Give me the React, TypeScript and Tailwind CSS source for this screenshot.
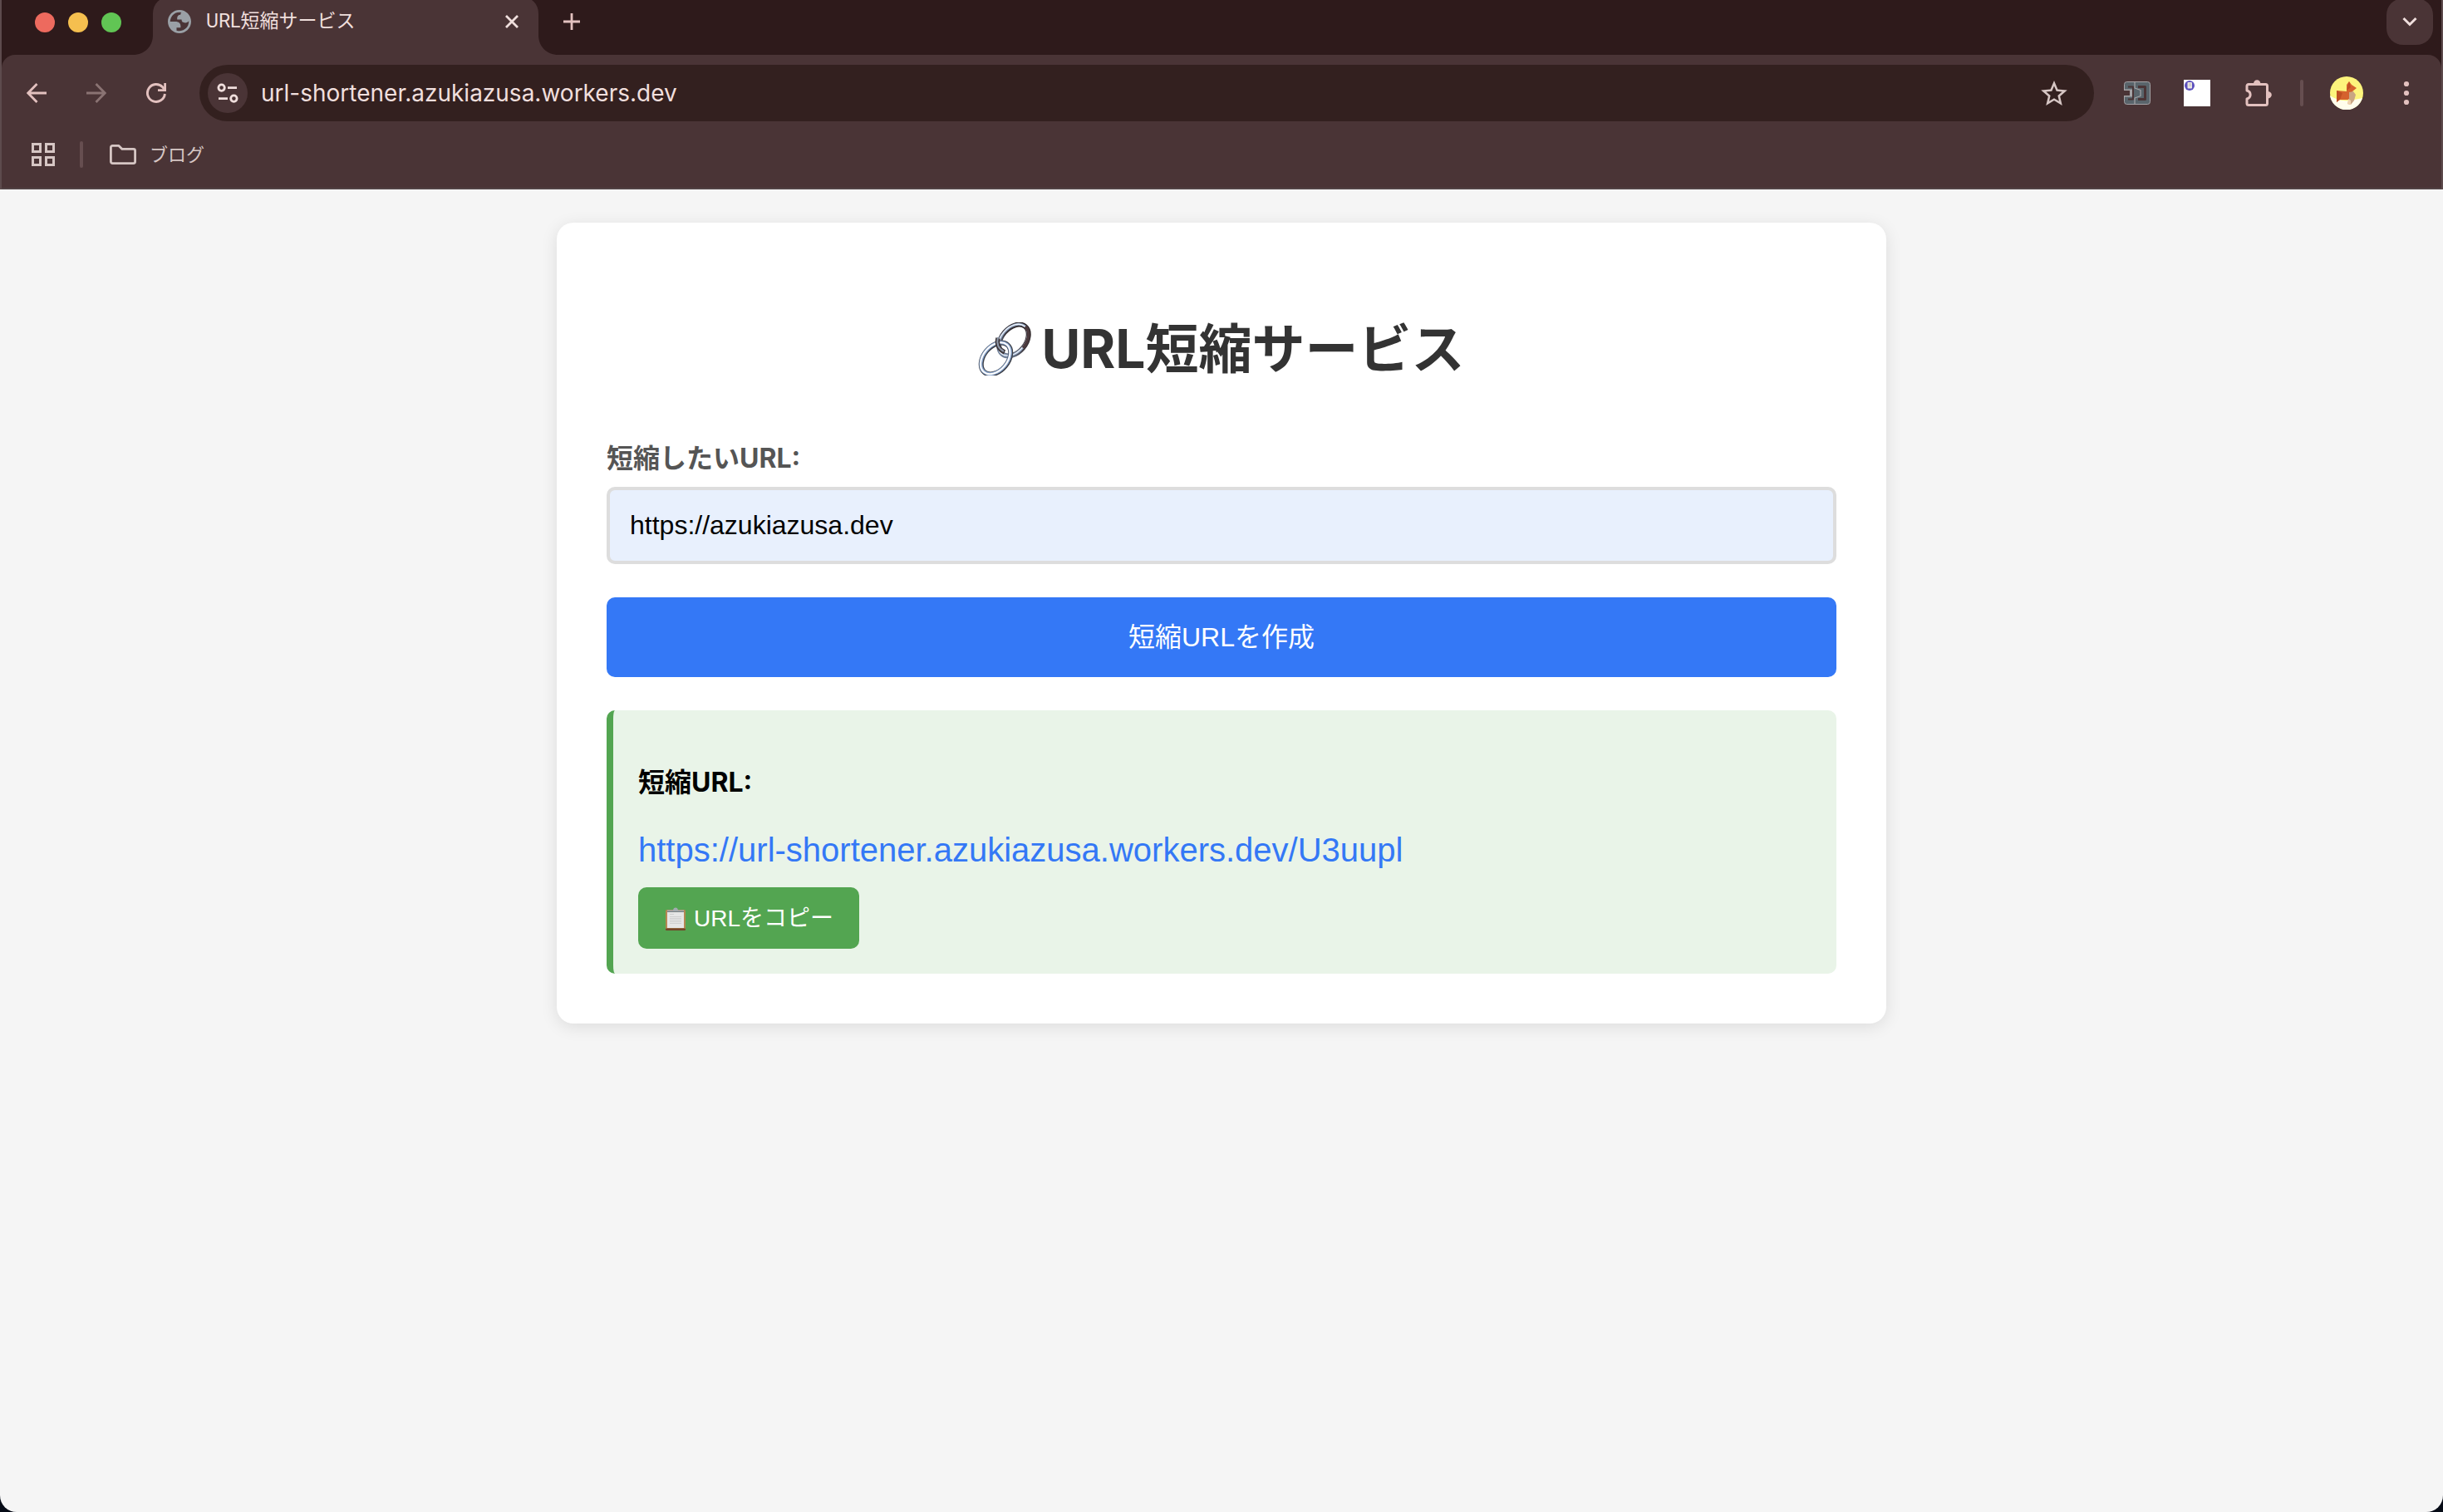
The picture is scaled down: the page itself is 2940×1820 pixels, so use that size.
import React, { useState } from "react";

const sans = "font-['Inter','Noto_Sans_CJK_JP',sans-serif]";
const arial = "font-['Liberation_Sans','Noto_Sans_CJK_JP',sans-serif]";
const roboto = "font-['Roboto','Noto_Sans_CJK_JP',sans-serif]";

function Globe() {
  return (
    <svg viewBox="2 2 20 20" className="size-7 shrink-0 fill-[#9aa0a6]" aria-hidden="true">
      <path
        fillRule="evenodd"
        d="M12 2C6.48 2 2 6.48 2 12s4.48 10 10 10 10-4.48 10-10S17.52 2 12 2ZM4 12h4.4c3.407.022 4.922 1.73 4.543 5.127H9.488v2.47a8.004 8.004 0 0 0 10.498-8.083C19.327 12.504 18.332 13 17 13c-2.137 0-3.21-.916-3.21-2.749h-3.758c-.274-2.728.683-4.092 2.87-4.092 0-.975.327-1.597.811-1.97A8.004 8.004 0 0 0 4 12Z"
      />
    </svg>
  );
}

function Flare({ side }: { side: "left" | "right" }) {
  return (
    <svg
      viewBox="0 0 24 24"
      aria-hidden="true"
      className={
        side === "left"
          ? "absolute bottom-0 right-full size-6 fill-[#4a3436]"
          : "absolute bottom-0 left-full size-6 fill-[#4a3436]"
      }
    >
      <path d={side === "left" ? "M24 0V24H0C14 24 24 14 24 0Z" : "M0 0V24H24C10 24 0 14 0 0Z"} />
    </svg>
  );
}

function TabStrip() {
  return (
    <div className="flex h-[66px] items-start overflow-hidden bg-[#2e1a1b] pl-10 pr-[10px]">
      <div className="flex h-[54px] items-center gap-4">
        <button aria-label="閉じる" className="size-6 rounded-full bg-[#ed6a5e]" />
        <button aria-label="最小化" className="size-6 rounded-full bg-[#f5bf4f]" />
        <button aria-label="最大化" className="size-6 rounded-full bg-[#61c554]" />
      </div>
      <div className="relative -mt-1 ml-[38px] flex h-[70px] w-[464px] items-start rounded-t-[20px] bg-[#4a3436] pl-[18px] pr-5 pt-1">
        <Flare side="left" />
        <Flare side="right" />
        <div className="flex h-[52px] flex-1 items-center gap-[18px]">
          <Globe />
          <span className={`text-[23px] leading-8 text-[#f0dfdd] ${roboto}`}>URL短縮サービス</span>
          <button aria-label="タブを閉じる" className="ml-auto flex size-6 items-center justify-center">
            <svg viewBox="0 0 16 16" className="size-4 stroke-[#f0dfdd]" strokeWidth="2.8" fill="none">
              <path d="M1 1 15 15M15 1 1 15" />
            </svg>
          </button>
        </div>
      </div>
      <button aria-label="新しいタブ" className="ml-6 flex h-[52px] w-8 items-center justify-center">
        <svg viewBox="0 0 20 20" className="size-5 stroke-[#e3c1bf]" strokeWidth="2.8" fill="none">
          <path d="M10 0V20M0 10H20" />
        </svg>
      </button>
      <button
        aria-label="タブを検索"
        className="-mt-0.5 ml-auto flex size-14 items-center justify-center rounded-[20px] bg-[#4a3436]"
      >
        <svg viewBox="0 0 18 12" className="h-3 w-[18px] stroke-[#f0dfdd]" strokeWidth="3" fill="none">
          <path d="M1.5 2 9 9.5 16.5 2" />
        </svg>
      </button>
    </div>
  );
}

function Toolbar() {
  return (
    <div className="flex h-[92px] items-center rounded-t-2xl bg-[#4a3436] pl-[22px] pr-[30px]">
      <div className="flex gap-8">
        <button aria-label="戻る" className="flex size-10 items-center justify-center">
          <svg viewBox="0 0 24 24" className="size-6 stroke-[#e3c1bf]" strokeWidth="2.8" fill="none">
            <path d="M24 12H2M12.5 1 1.8 12 12.5 23" />
          </svg>
        </button>
        <button aria-label="進む" className="flex size-10 items-center justify-center">
          <svg viewBox="0 0 24 24" className="size-6 stroke-[#8a7373]" strokeWidth="2.8" fill="none">
            <path d="M0 12H22M11.5 1 22.2 12 11.5 23" />
          </svg>
        </button>
        <button aria-label="再読み込み" className="flex size-10 items-center justify-center">
          <svg viewBox="0 0 24 24" className="size-6" fill="none">
            <path d="M22.4 13A10.5 10.5 0 1 1 19.6 4.8L22.4 8" className="stroke-[#e3c1bf]" strokeWidth="2.9" />
            <path d="M24 0V10H14V7.2H21.2V0Z" className="fill-[#e3c1bf]" />
          </svg>
        </button>
      </div>

      <div className="ml-8 flex h-[68px] flex-1 items-center rounded-full bg-[#33201f] pl-[10px] pr-8">
        <button aria-label="サイト情報を表示" className="flex size-12 shrink-0 items-center justify-center rounded-full bg-[#4a3436]">
          <svg viewBox="0 0 26 26" className="size-[26px] stroke-[#f0dfdd]" strokeWidth="2.8" fill="none">
            <circle cx="5.6" cy="6.6" r="3.7" />
            <path d="M13 6.6H24M2 19.6H13" />
            <circle cx="20.4" cy="19.6" r="3.7" />
          </svg>
        </button>
        <input
          aria-label="アドレスバー"
          defaultValue="url-shortener.azukiazusa.workers.dev"
          className="ml-4 min-w-0 flex-1 bg-transparent text-[28px] leading-10 text-[#f0dfdd] outline-none"
        />
        <button aria-label="ブックマークに追加" className="flex size-8 items-center justify-center">
          <svg viewBox="2 2 20 19" className="h-[30px] w-8 fill-[#d6c6c4]">
            <path d="m22 9.24-7.19-.62L12 2 9.19 8.63 2 9.24l5.46 4.73L5.82 21 12 17.27 18.18 21l-1.63-7.03L22 9.24zM12 15.4l-3.76 2.27 1-4.28-3.32-2.88 4.38-.38L12 6.1l1.71 4.04 4.38.38-3.32 2.88 1 4.28L12 15.4z" />
          </svg>
        </button>
      </div>

      <div className="ml-9 flex items-center">
        <button aria-label="拡張機能 1">
          <svg viewBox="0 0 32 28" className="h-7 w-8" fill="none" strokeLinejoin="round">
            <rect x="0.5" y="0.5" width="31" height="27" rx="3" className="fill-[#59646b] stroke-[#a5a3a6]" />
            <path d="M0 9.5H10V18.5H0Z" className="fill-[#a5a3a6]" />
            <path d="M0 11H7V17H0Z" className="fill-[#4a3436]" />
            <path d="M5 6.5H11V21.5H5" className="stroke-[#4a3436]" strokeWidth="2" />
            <path d="M17 6.5H25.500V21.500H17" className="stroke-[#4a3436]" strokeWidth="3" />
            <path d="M13 1V8L20 10.500V17.500L13 20V27" className="stroke-[#a5a3a6]" strokeWidth="1.200" />
          </svg>
        </button>
        <button aria-label="拡張機能 2" className="ml-10">
          <svg viewBox="0 0 32 32" className="size-8">
            <rect width="32" height="32" fill="#fff" />
            <circle cx="7" cy="7" r="6" fill="#5c50bd" />
            <rect x="4.500" y="3" width="5.500" height="7.500" rx="0.8" fill="#e9e7e4" />
            <path d="M6 5H9M6 7H9" stroke="#b5b0a8" strokeWidth="0.8" />
          </svg>
        </button>
        <button aria-label="拡張機能" className="ml-[42px]">
          <svg viewBox="0 0 32 32" className="size-8">
            <path
              d="M2 11V7.500A2 2 0 0 1 4 5.500H24.500A2 2 0 0 1 26.500 7.500V28.500A2 2 0 0 1 24.500 30.500H4A2 2 0 0 1 2 28.500V23C7.500 21.500 7.500 14.500 2 13Z"
              className="fill-none stroke-[#e3c1bf]"
              strokeWidth="3"
              strokeLinejoin="round"
            />
            <path d="M10 5A4.200 4.800 0 0 1 18.400 5ZM27 14A4.800 4.200 0 0 1 27 22.400Z" className="fill-[#e3c1bf]" />
          </svg>
        </button>
        <span className="ml-[34px] h-8 w-1 rounded-full bg-[#664e50]" />
        <button aria-label="プロフィール" className="ml-8">
          <svg viewBox="0 0 40 40" className="size-10">
            <circle cx="20" cy="20" r="20" fill="#fdf47c" />
            <path d="M0 23C6 27 14 30 22 29 29 28 35 27 39 26A20 20 0 0 1 0 23Z" fill="#fffdeb" />
            <path d="M8 17 20 18 20 10 23 6 26 10 32 14 27 18 27 27 22 28 16 28 11 28 8 31Z" fill="#d5622e" />
            <path d="M8 17 15 20 12 28 8 31ZM23 6 25 13 20 17Z" fill="#bf4f22" />
            <path d="M23 19 28 18 31 22 29 29 25 34 21 33 23 27Z" fill="#c9a582" />
            <path d="M22 27 25 29 25 34 21 33Z" fill="#f0d3ae" />
          </svg>
        </button>
        <button aria-label="メニュー" className="ml-10">
          <svg viewBox="0 0 24 32" className="h-8 w-6 fill-[#e3c1bf]">
            <circle cx="12" cy="5" r="3.100" />
            <circle cx="12" cy="16" r="3.100" />
            <circle cx="12" cy="27" r="3.100" />
          </svg>
        </button>
      </div>
    </div>
  );
}

function BookmarksBar() {
  return (
    <nav className="flex items-center border-b-2 border-[#524345] bg-[#4a3436] pb-3 pl-9">
      <button aria-label="アプリ" className="flex h-14 items-center">
        <svg viewBox="0 0 28 28" className="size-7 stroke-[#d6c6c4]" strokeWidth="3" fill="none">
          <path d="M1.500 1.500H10.500V10.500H1.500ZM17.500 1.500H26.500V10.500H17.500ZM1.500 17.500H10.500V26.500H1.500ZM17.500 17.500H26.500V26.500H17.500Z" />
        </svg>
      </button>
      <span className="ml-[30px] h-8 w-1 rounded-full bg-[#664e50]" />
      <button className="ml-8 flex items-center gap-4 text-[22px] leading-8 text-[#d6c6c4]">
        <svg viewBox="0 0 32 24" className="h-6 w-8 stroke-[#d6c6c4]" strokeWidth="2.8" strokeLinejoin="round" fill="none" aria-hidden="true">
          <path d="M3.400 1.400H11L15 5.400H28.600A2 2 0 0 1 30.600 7.400V20.600A2 2 0 0 1 28.600 22.600H3.400A2 2 0 0 1 1.400 20.600V3.400A2 2 0 0 1 3.400 1.400Z" />
        </svg>
        ブログ
      </button>
    </nav>
  );
}

function LinkEmoji() {
  return (
    <svg viewBox="0 0 64 64" className="size-16" fill="none" role="img" aria-label="リンク">
      <defs>
        <linearGradient id="steel" x1="0" y1="0" x2="1" y2="0">
          <stop offset="0" stopColor="#6f7f97" />
          <stop offset="0.5" stopColor="#39343a" />
          <stop offset="1" stopColor="#2c2527" />
        </linearGradient>
      </defs>
      <g transform="rotate(-50 43 21.500)">
        <ellipse cx="43" cy="21.500" rx="21.500" ry="14.500" stroke="url(#steel)" strokeWidth="6" />
        <ellipse cx="43" cy="21" rx="21.500" ry="14.500" stroke="#8fa3c0" strokeWidth="3" />
        <ellipse cx="42.600" cy="20.600" rx="21.500" ry="14.500" stroke="#eef3fa" strokeWidth="1.300" />
        <path d="M43 36A21.500 14.500 0 0 0 64.500 21.500" stroke="#4b3a3d" strokeWidth="3.600" />
      </g>
      <g transform="rotate(-50 21.500 43.500)">
        <ellipse cx="21.500" cy="43.500" rx="21.500" ry="14.500" stroke="#3d4048" strokeWidth="6" />
        <ellipse cx="21.500" cy="43" rx="21.500" ry="14.500" stroke="#8aa6cf" strokeWidth="4" />
        <ellipse cx="21.200" cy="42.800" rx="21.500" ry="14.500" stroke="#fff" strokeWidth="2" />
      </g>
      <path d="M24 19C22 26 25 33 32 36" stroke="#3a3336" strokeWidth="5.400" />
      <path d="M24 18C22 26 25 32 31 35" stroke="#8d97a8" strokeWidth="2" />
    </svg>
  );
}

function ClipboardEmoji() {
  return (
    <svg viewBox="0 0 28 28" className="size-7" aria-hidden="true">
      <rect x="2" y="3" width="24" height="25" rx="1.500" fill="#b58752" />
      <rect x="2" y="25.500" width="24" height="2.500" rx="1" fill="#71452a" />
      <rect x="4" y="5" width="20" height="20" fill="#e6e6e6" />
      <path d="M7 8.500H12M7 11.500H21M7 13.500H21M7 15.500H21M7 17.500H21M7 19.500H21" stroke="#cfcfcf" strokeWidth="1" />
      <path d="M4 3.500H11Q11.500 0.500 14 0.500T17 3.500H24V6H4Z" fill="#a3abb0" />
      <path d="M4 5.500H24" stroke="#777d80" strokeWidth="1" />
    </svg>
  );
}

function Shortener() {
  const [url, setUrl] = useState("https://azukiazusa.dev");
  return (
    <section className="w-full max-w-[1600px] rounded-[20px] bg-white p-[60px] shadow-[0_4px_20px_rgba(0,0,0,0.1)]">
      <h1 className="mb-[72px] mt-[52px] flex items-center justify-center gap-3 text-[64px] font-bold leading-[80px] text-[#333333]">
        <LinkEmoji />
        URL短縮サービス
      </h1>
      <form onSubmit={(e) => e.preventDefault()}>
        <label htmlFor="url" className="mb-[14px] block text-[32px] font-bold leading-10 text-[#555555]">
          短縮したいURL:
        </label>
        <input
          id="url"
          type="text"
          value={url}
          onChange={(e) => setUrl(e.target.value)}
          className={`block w-full rounded-[10px] border-4 border-[#dddddd] bg-[#e8f0fd] px-6 py-6 text-[32px] leading-[37px] text-black outline-none ${arial}`}
        />
        <button
          type="submit"
          className={`mt-10 block w-full rounded-[10px] bg-[#3478f6] py-7 text-[32px] leading-10 text-white ${arial}`}
        >
          短縮URLを作成
        </button>
      </form>
      <div className="mt-10 rounded-[10px] border-l-8 border-[#53a551] bg-[#e9f4e8] px-[30px] pb-[30px] pt-[67px]">
        <h2 className="text-[32px] font-bold leading-10 text-black">短縮URL:</h2>
        <a href="#U3uupl" className={`mt-9 block w-fit text-[40px] leading-[50px] text-[#3478f6] ${arial}`}>
          https://url-shortener.azukiazusa.workers.dev/U3uupl
        </a>
        <button
          type="button"
          className={`mt-5 flex items-center gap-2 rounded-[10px] bg-[#53a551] px-[31px] pb-4 pt-[18px] text-[28px] leading-10 text-white ${arial}`}
        >
          <ClipboardEmoji />
          URLをコピー
        </button>
      </div>
    </section>
  );
}

export default function App() {
  return (
    <div className={`flex min-h-screen flex-col bg-[#060b16] ${sans}`}>
      <header className="border-x-2 border-[#5d4b4d] bg-[#2e1a1b]">
        <TabStrip />
        <Toolbar />
        <BookmarksBar />
      </header>
      <main className="flex flex-1 items-start justify-center rounded-b-[20px] bg-[#f5f5f5] p-10">
        <Shortener />
      </main>
    </div>
  );
}
